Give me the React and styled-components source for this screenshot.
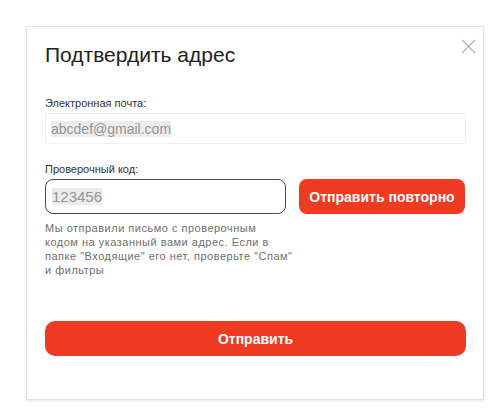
import React from 'react';
import styled, { createGlobalStyle } from 'styled-components';

const GlobalStyle = createGlobalStyle`
  html, body {
    margin: 0;
    padding: 0;
    background: #ffffff;
  }
  body {
    font-family: "Liberation Sans", Arial, sans-serif;
  }
`;

const Page = styled.div`
  width: 504px;
  height: 415px;
  padding: 26px 0 0 26px;
  box-sizing: border-box;
`;

const Card = styled.div`
  position: relative;
  width: 458px;
  box-sizing: border-box;
  padding: 16px 17px 43px 18px;
  background: #fff;
  border: 1px solid #e4e4e4;
  box-shadow: 0 1px 3px rgba(0, 0, 0, 0.1);
`;

const CloseButton = styled.button`
  position: absolute;
  top: 12px;
  right: 7px;
  width: 15px;
  height: 15px;
  padding: 0;
  border: 0;
  background: none;
  cursor: pointer;
  svg {
    display: block;
  }
`;

const Title = styled.h2`
  margin: 0;
  font-size: 21px;
  line-height: 24px;
  font-weight: 400;
  color: #222;
`;

const Label = styled.div`
  margin-top: ${p => p.$top}px;
  font-size: 11px;
  line-height: 14px;
  color: #333;
`;

const EmailField = styled.div`
  margin-top: 3px;
  height: 31px;
  box-sizing: border-box;
  border: 1px solid #f0f0f0;
  border-radius: 3px;
  padding-left: 5px;
  display: flex;
  align-items: center;
`;

const Filled = styled.span`
  font-size: ${p => p.$size}px;
  line-height: ${p => p.$size + 2}px;
  color: #959595;
  background: #ececec;
`;

const CodeRow = styled.div`
  margin-top: 3px;
  display: flex;
  gap: 13px;
`;

const CodeInput = styled.div`
  width: 241px;
  height: 35px;
  box-sizing: border-box;
  border: 1.5px solid #4d4d4d;
  border-radius: 8px;
  padding-left: 6px;
  display: flex;
  align-items: center;
`;

const RedButton = styled.button`
  width: ${p => p.$width || '100%'};
  height: 35px;
  border: 0;
  border-radius: ${p => p.$radius}px;
  background: #ee3b22;
  color: #fff;
  font-family: "Liberation Sans", Arial, sans-serif;
  font-size: 14px;
  font-weight: 700;
  cursor: pointer;
  padding: 0;
`;

const Hint = styled.p`
  margin: 7px 0 0;
  font-size: 11px;
  line-height: 14px;
  letter-spacing: 0.5px;
  color: #6f6f6f;
  white-space: nowrap;
`;

const SubmitWrap = styled.div`
  margin-top: 44px;
`;

const App = () => {
  return (
    <>
      <GlobalStyle />
      <Page>
        <Card>
          <CloseButton aria-label="Закрыть">
            <svg width="15" height="15" viewBox="0 0 15 15">
              <path d="M1 1 L14 14 M14 1 L1 14" stroke="#b3b3b3" strokeWidth="1.3" fill="none" />
            </svg>
          </CloseButton>
          <Title>Подтвердить адрес</Title>

          <Label $top={29}>Электронная почта:</Label>
          <EmailField>
            <Filled $size={14}>abcdef@gmail.com</Filled>
          </EmailField>

          <Label $top={18}>Проверочный код:</Label>
          <CodeRow>
            <CodeInput>
              <Filled $size={15}>123456</Filled>
            </CodeInput>
            <RedButton $width="166px" $radius={8}>Отправить повторно</RedButton>
          </CodeRow>
          <Hint>
            Мы отправили письмо с проверочным<br />
            кодом на указанный вами адрес. Если в<br />
            папке "Входящие" его нет, проверьте "Спам"<br />
            и фильтры
          </Hint>

          <SubmitWrap>
            <RedButton $radius={10}>Отправить</RedButton>
          </SubmitWrap>
        </Card>
      </Page>
    </>
  );
};

export default App;
